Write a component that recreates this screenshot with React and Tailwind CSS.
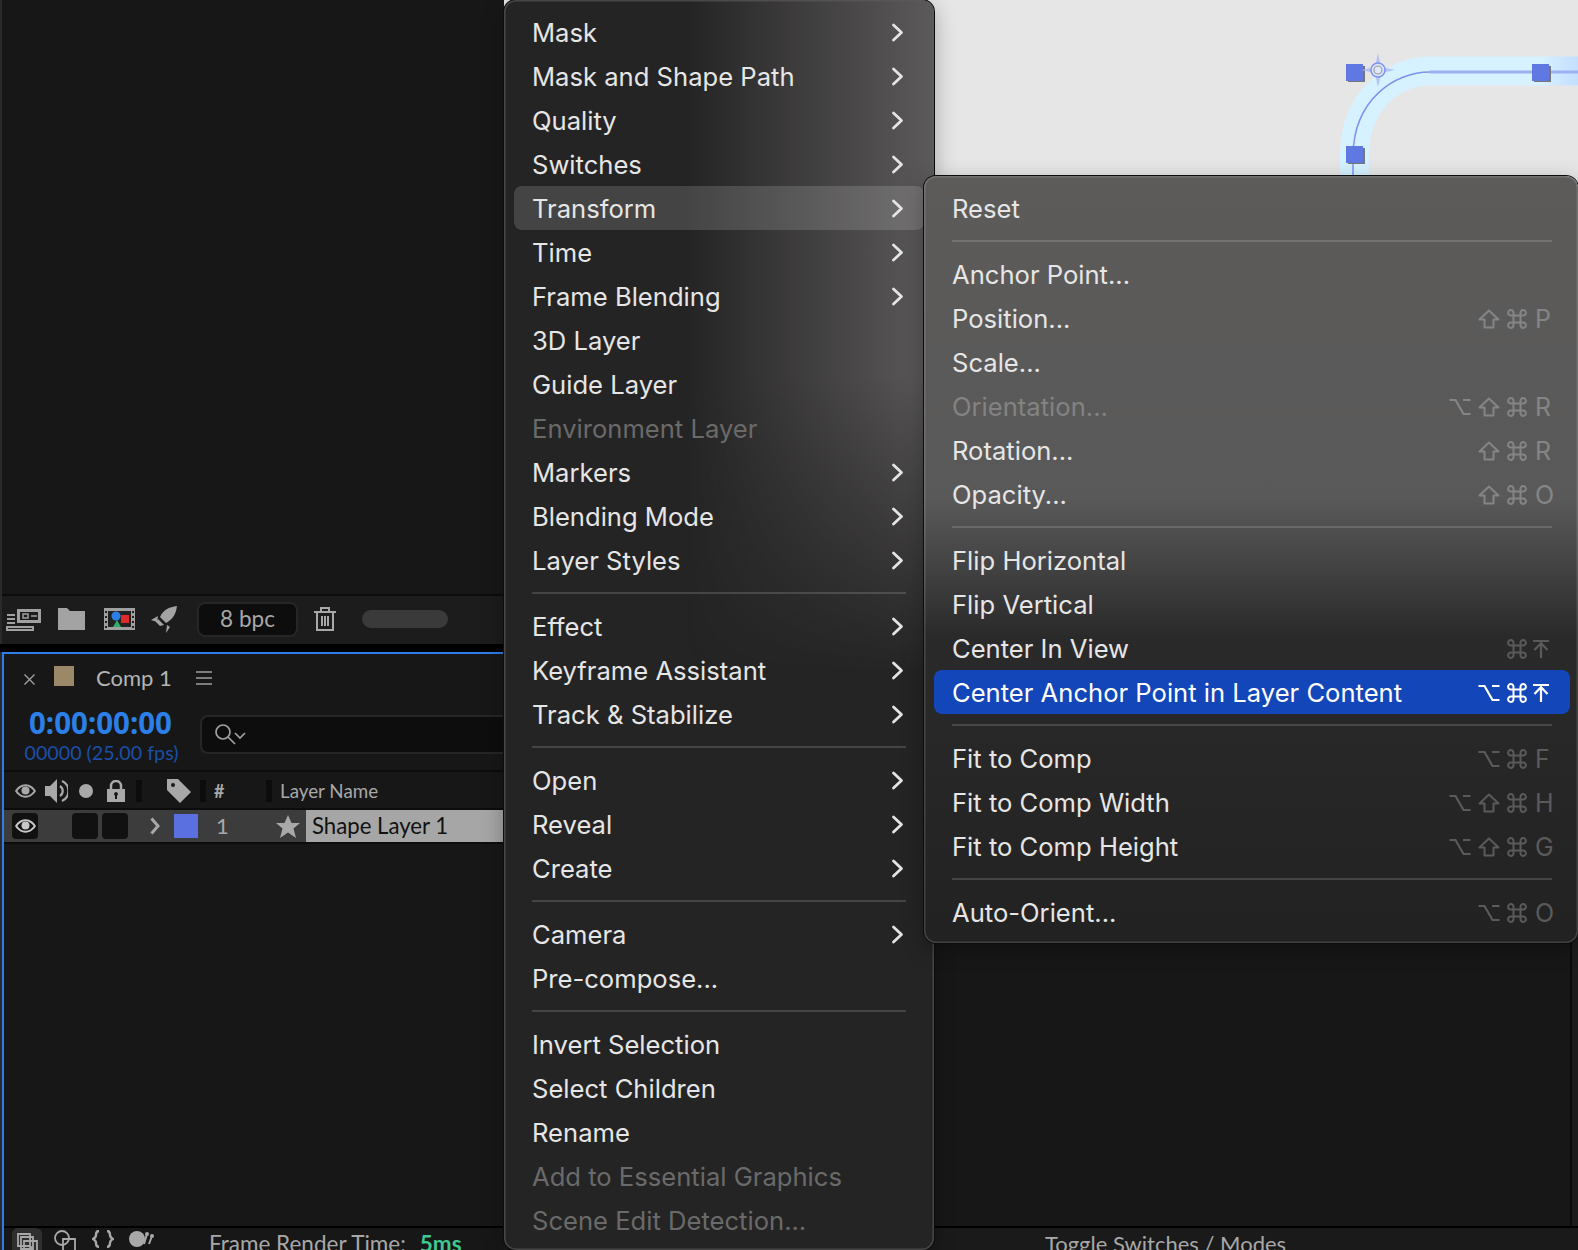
import React from 'react';

const mainMenu = [
  [
    { label: 'Mask', sub: true },
    { label: 'Mask and Shape Path', sub: true },
    { label: 'Quality', sub: true },
    { label: 'Switches', sub: true },
    { label: 'Transform', sub: true, open: true },
    { label: 'Time', sub: true },
    { label: 'Frame Blending', sub: true },
    { label: '3D Layer' },
    { label: 'Guide Layer' },
    { label: 'Environment Layer', disabled: true },
    { label: 'Markers', sub: true },
    { label: 'Blending Mode', sub: true },
    { label: 'Layer Styles', sub: true },
  ],
  [
    { label: 'Effect', sub: true },
    { label: 'Keyframe Assistant', sub: true },
    { label: 'Track & Stabilize', sub: true },
  ],
  [
    { label: 'Open', sub: true },
    { label: 'Reveal', sub: true },
    { label: 'Create', sub: true },
  ],
  [
    { label: 'Camera', sub: true },
    { label: 'Pre-compose...' },
  ],
  [
    { label: 'Invert Selection' },
    { label: 'Select Children' },
    { label: 'Rename' },
    { label: 'Add to Essential Graphics', disabled: true },
    { label: 'Scene Edit Detection...', disabled: true },
  ],
];

const transformMenu = [
  [{ label: 'Reset' }],
  [
    { label: 'Anchor Point...' },
    { label: 'Position...', keys: ['shift', 'cmd', 'P'] },
    { label: 'Scale...' },
    { label: 'Orientation...', disabled: true, light: true, keys: ['opt', 'shift', 'cmd', 'R'] },
    { label: 'Rotation...', keys: ['shift', 'cmd', 'R'] },
    { label: 'Opacity...', keys: ['shift', 'cmd', 'O'] },
  ],
  [
    { label: 'Flip Horizontal' },
    { label: 'Flip Vertical' },
    { label: 'Center In View', keys: ['cmd', 'top'], dim: true },
    { label: 'Center Anchor Point in Layer Content', keys: ['opt', 'cmd', 'top'], active: true },
  ],
  [
    { label: 'Fit to Comp', keys: ['opt', 'cmd', 'F'], dim: true },
    { label: 'Fit to Comp Width', keys: ['opt', 'shift', 'cmd', 'H'], dim: true },
    { label: 'Fit to Comp Height', keys: ['opt', 'shift', 'cmd', 'G'], dim: true },
  ],
  [{ label: 'Auto-Orient...', keys: ['opt', 'cmd', 'O'], dim: true }],
];

const Chevron = () => (
  <svg width="13" height="19" viewBox="0 0 13 19" fill="none" stroke="#e4e4e4" strokeWidth="2.8" strokeLinecap="round" strokeLinejoin="round">
    <path d="M2.5 2l8 7.5-8 7.5" />
  </svg>
);

const KeyGlyph = ({ name }) => {
  if (name === 'opt') {
    return (
      <svg width="22" height="20" viewBox="0 0 22 20" fill="none" stroke="currentColor" strokeWidth="2.2">
        <path d="M0.5 3h6l8 14h7M14 3h7.5" />
      </svg>
    );
  }
  if (name === 'shift') {
    return (
      <svg width="22" height="20" viewBox="0 0 22 20" fill="none" stroke="currentColor" strokeWidth="2" strokeLinejoin="round">
        <path d="M11 1.5L1.5 10.5h5v8h9v-8h5z" />
      </svg>
    );
  }
  if (name === 'cmd') {
    return (
      <svg width="20" height="20" viewBox="0 0 20 20" fill="none" stroke="currentColor" strokeWidth="2">
        <path d="M6.5 6.5h7v7h-7zM6.5 6.5H4a2.7 2.7 0 1 1 2.5-2.5zM13.500 6.500V4A2.700 2.700 0 1 1 16 6.500zM6.500 13.500H4A2.700 2.700 0 1 0 6.500 16zM13.500 13.500V16A2.700 2.700 0 1 0 16 13.500z" />
      </svg>
    );
  }
  if (name === 'top') {
    return (
      <svg className="ml-[-1px] mr-[5px]" width="16" height="20" viewBox="0 0 16 20" fill="none" stroke="currentColor" strokeWidth="2.2">
        <path d="M0 2h16M8 19V4M1.500 11L8 4l6.500 7" />
      </svg>
    );
  }
  return <span className="ml-[1px] w-[19px] text-[25px] leading-none">{name}</span>;
};

const MenuRow = ({ item }) => {
  let rowColor = 'text-[#e6e6e6]';
  if (item.disabled) rowColor = item.light ? 'text-[#838383]' : 'text-[#6a6a6a]';
  let bg = '';
  if (item.open) bg = 'rounded-lg bg-white/15';
  if (item.active) bg = 'rounded-lg bg-[#1346b8] text-white';
  let keyColor = item.dim ? 'text-[#5a5a5a]' : 'text-[#858585]';
  if (item.active) keyColor = 'text-white';
  return (
    <div className={`flex h-[44px] items-center pl-[18px] pr-[16px] ${rowColor} ${bg}`}>
      <span className="whitespace-nowrap pt-[2px] text-[25.600px]">{item.label}</span>
      {item.sub && (
        <span className="ml-auto mr-[4px] flex">
          <Chevron />
        </span>
      )}
      {item.keys && (
        <span className={`ml-auto flex items-center gap-[7px] pt-[2px] ${keyColor}`}>
          {item.keys.map((k) => (
            <KeyGlyph key={k} name={k} />
          ))}
        </span>
      )}
    </div>
  );
};

const MenuGroups = ({ groups, sepClass }) => (
  <>
    {groups.map((group, i) => (
      <div key={i}>
        {i > 0 && (
          <div className="flex h-[22px] items-center">
            <div className={`h-[2px] bg-white/15 ${sepClass}`} />
          </div>
        )}
        {group.map((item) => (
          <MenuRow key={item.label} item={item} />
        ))}
      </div>
    ))}
  </>
);

const GrayEye = ({ className }) => (
  <svg className={className} viewBox="0 0 22 14" fill="#a8a8a8">
    <path d="M11 0C6 0 2 3.500 0 7c2 3.500 6 7 11 7s9-3.500 11-7c-2-3.500-6-7-11-7zm0 2c3.600 0 6.800 2.200 8.600 5-1.800 2.800-5 5-8.600 5S4.200 9.800 2.400 7C4.200 4.200 7.400 2 11 2z" />
    <circle cx="11" cy="6.500" r="4.200" />
  </svg>
);

const ProjectToolbar = () => (
  <div className="flex h-[48px] items-center bg-[#1c1c1c] pb-[2px]">
    <svg className="ml-[4px] h-[24px] w-[36px]" viewBox="0 0 36 24" fill="none" stroke="#a0a0a0">
      <path d="M11 2h24v14H11z" fill="#a0a0a0" stroke="none" />
      <path d="M14 5h18v8H14z" fill="#1c1c1c" stroke="none" />
      <path d="M17 7h5v4h-5zM25 9h6" strokeWidth="1.500" />
      <path d="M1 8h8M1 12h8M1 16h8M1 20h26v3H1z" strokeWidth="2" />
    </svg>
    <svg className="ml-[16px] h-[22px] w-[27px]" viewBox="0 0 27 22" fill="#a3a3a3">
      <path d="M0 0h9l3 3h15v19H0z" />
    </svg>
    <svg className="ml-[19px] h-[22px] w-[31px]" viewBox="0 0 31 22">
      <path d="M0 0h31v22H0z" fill="#a0a0a0" />
      <path d="M4 3h23v16H4z" fill="#222" />
      <path d="M1 3h2v2H1zM1 8h2v2H1zM1 13h2v2H1zM1 18h2v2H1zM28 3h2v2h-2zM28 8h2v2h-2zM28 13h2v2h-2zM28 18h2v2h-2z" fill="#222" />
      <circle cx="12" cy="8" r="4.500" fill="#2d7fe8" />
      <path d="M17 7h8v8h-8z" fill="#e02a2a" />
      <path d="M13 12l4 7H9z" fill="#2fae6a" />
    </svg>
    <svg className="ml-[16px] h-[27px] w-[26px]" viewBox="0 0 26 27" fill="#a3a3a3">
      <path d="M26 0c-8 1-14 4-17 11l6 6C22 13 25 8 26 0z" />
      <path d="M7 10L0 14l6 2zM16 19l-1 8 4-6z" />
      <path d="M7 13l6 6-4 1-4-4z" />
    </svg>
    <div className="ml-[20px] flex h-[35px] w-[101px] items-center justify-center rounded-lg border-2 border-[#262626] bg-[#0d0d0d] font-['Lato'] text-[22.500px] text-[#a8a8a8]">
      8 bpc
    </div>
    <svg className="ml-[16px] h-[24px] w-[22px]" viewBox="0 0 22 24" fill="none" stroke="#a8a8a8" strokeWidth="2">
      <path d="M0 5h22M7 5V1h8v4M3 5h16v18H3zM8 9v10M11 9v10M14 9v10" />
    </svg>
    <div className="ml-[26px] h-[18px] w-[86px] rounded-full bg-[#3a3a3a]" />
  </div>
);

const LayerHeader = () => (
  <div className="flex h-[36px] items-center pt-[2px] text-[#a8a8a8]">
    <GrayEye className="ml-[11px] h-[14px] w-[21px]" />
    <svg className="ml-[9px] h-[24px] w-[23px]" viewBox="0 0 23 24" fill="#a8a8a8">
      <path d="M0 7h5l7-7v24l-7-7H0z" />
      <path d="M15 7a6 6 0 0 1 0 10M17 2a11 11 0 0 1 0 20" fill="none" stroke="#a8a8a8" strokeWidth="2.200" />
    </svg>
    <div className="ml-[11px] h-[14px] w-[14px] rounded-full bg-[#a8a8a8]" />
    <svg className="ml-[14px] h-[22px] w-[18px]" viewBox="0 0 18 22" fill="#a8a8a8">
      <path d="M4 10V6a5 5 0 0 1 10 0v4" fill="none" stroke="#a8a8a8" strokeWidth="2.500" />
      <path fillRule="evenodd" d="M0 9h18v13H0zM9 12a2 2 0 0 0-1 3.700V19h2v-3.300A2 2 0 0 0 9 12z" />
    </svg>
    <div className="ml-[11px] h-[22px] w-[6px] bg-[#0c0c0c]" />
    <svg className="ml-[25px] h-[24px] w-[24px]" viewBox="0 0 24 24" fill="#a8a8a8">
      <path fillRule="evenodd" d="M0 0h11l13 13-11 11L0 11zM6 4a2 2 0 1 0 0 4 2 2 0 0 0 0-4z" />
    </svg>
    <div className="ml-[9px] h-[22px] w-[6px] bg-[#0c0c0c]" />
    <span className="ml-[8px] w-[10px] font-['Lato'] text-[18px] font-bold leading-none">#</span>
    <div className="ml-[42px] h-[22px] w-[6px] bg-[#0c0c0c]" />
    <span className="ml-[8px] font-['Lato'] text-[18.800px] leading-none">Layer Name</span>
  </div>
);

const LayerRow = () => (
  <div className="flex h-[32px] items-center bg-[#3c3c3c]">
    <div className="ml-[8px] flex h-[26px] w-[26px] items-center justify-center rounded bg-[#111111]">
      <svg className="h-[14px] w-[21px]" viewBox="0 0 22 14" fill="#c8c8c8">
        <path d="M11 0C6 0 2 3.500 0 7c2 3.500 6 7 11 7s9-3.500 11-7c-2-3.500-6-7-11-7zm0 2c3.600 0 6.800 2.200 8.600 5-1.800 2.800-5 5-8.600 5S4.200 9.800 2.400 7C4.200 4.200 7.400 2 11 2z" />
        <circle cx="11" cy="6.500" r="4.200" />
      </svg>
    </div>
    <div className="ml-[34px] h-[26px] w-[26px] rounded bg-[#111111]" />
    <div className="ml-[4px] h-[26px] w-[26px] rounded bg-[#111111]" />
    <svg className="ml-[22px] h-[18px] w-[10px]" viewBox="0 0 10 18" fill="none" stroke="#a8a8a8" strokeWidth="3">
      <path d="M1.500 1.500L8 9l-6.500 7.500" />
    </svg>
    <div className="ml-[14px] h-[24px] w-[24px] bg-[#5a6fe0]" />
    <span className="ml-[18px] w-[13px] font-['Lato'] text-[22px] leading-none text-[#a8a8a8]">1</span>
    <svg className="ml-[47px] h-[23px] w-[24px]" viewBox="0 0 24 23" fill="#a8a8a8">
      <path d="M12 0l3.500 8H24l-6.500 5.500L20 23l-8-5.500L4 23l2.500-9.500L0 8h8.500z" />
    </svg>
    <div className="ml-[6px] flex h-full flex-1 items-center bg-[#a6a6a6] pl-[6px] font-['Lato'] text-[22.200px] text-[#111111]">
      Shape Layer 1
    </div>
  </div>
);

const TimelinePanel = () => (
  <div className="ml-[2px] flex min-h-0 flex-1 flex-col border-l-2 border-t-2 border-[#2f7de6] bg-[#171717]">
    <div className="flex h-[50px] items-center">
      <svg className="ml-[20px] h-[11px] w-[11px]" viewBox="0 0 11 11" stroke="#a0a0a0" strokeWidth="1.400">
        <path d="M0.500 0.500l10 10M10.500 0.500l-10 10" />
      </svg>
      <div className="mb-[6px] ml-[19px] h-[20px] w-[20px] bg-[#9a8866]" />
      <span className="mb-[4px] ml-[22px] font-['Lato'] text-[22px] text-[#b4b4b4]">Comp 1</span>
      <svg className="mb-[2px] ml-[24px] h-[14px] w-[16px]" viewBox="0 0 16 14" stroke="#a0a0a0" strokeWidth="1.600">
        <path d="M0 1h16M0 7h16M0 13h16" />
      </svg>
    </div>
    <div className="flex h-[66px] items-start">
      <div className="ml-[20px] w-[158px] pt-[1px]">
        <div className="pr-[5px] text-center font-['Noto_Sans'] text-[29.500px] font-bold leading-[36px] text-[#2d7fe8]">0:00:00:00</div>
        <div className="mt-[1px] whitespace-nowrap pr-[3px] text-center font-['Lato'] text-[19.700px] leading-[22px] text-[#1b4fa8]">00000 (25.00 fps)</div>
      </div>
      <div className="ml-[18px] mt-[11px] flex h-[39px] flex-1 items-center rounded-l-lg border-2 border-r-0 border-[#262626] bg-[#0d0d0d] pl-[13px]">
        <svg className="h-[22px] w-[32px]" viewBox="0 0 32 22" fill="none" stroke="#a0a0a0" strokeWidth="1.700">
          <circle cx="8" cy="8" r="7" />
          <path d="M13 13l7 7M20 9l5 5 5-5" />
        </svg>
      </div>
    </div>
    <div className="h-[2px] bg-[#0c0c0c]" />
    <LayerHeader />
    <div className="h-[2px] bg-[#0c0c0c]" />
    <LayerRow />
    <div className="h-[2px] bg-[#0c0c0c]" />
    <div className="flex-1" />
  </div>
);

const StatusLeft = () => (
  <div className="flex h-[22px] items-start overflow-hidden border-l-2 border-[#2f7de6] bg-[#171717]">
    <div className="ml-[8px] h-[30px] w-[30px] rounded-md bg-[#2f2f2f] pl-[5px] pt-[5px]">
      <svg className="h-[22px] w-[21px]" viewBox="0 0 21 22" fill="none" stroke="#a8a8a8" strokeWidth="1.800">
        <path d="M1 1h12v12H1zM4 4h12v12H4zM7 8h13v13H7z" />
        <circle cx="14" cy="15" r="2" fill="#a8a8a8" stroke="none" />
      </svg>
    </div>
    <svg className="ml-[12px] mt-[2px] h-[24px] w-[22px]" viewBox="0 0 22 24" fill="none" stroke="#a8a8a8" strokeWidth="1.800">
      <circle cx="8" cy="8" r="7" />
      <path d="M9 9h12v12H9z" />
    </svg>
    <svg className="ml-[16px] mt-[2px] h-[24px] w-[22px]" viewBox="0 0 22 24" fill="none" stroke="#a8a8a8" strokeWidth="2.400">
      <path d="M7 1C4 1 4 3 4 5c0 2-1 3-3 4 2 1 3 2 3 4 0 2 0 4 3 4M15 1c3 0 3 2 3 4 0 2 1 3 3 4-2 1-3 2-3 4 0 2 0 4-3 4" />
    </svg>
    <svg className="ml-[15px] mt-[2px] h-[24px] w-[25px]" viewBox="0 0 25 24" fill="#a8a8a8">
      <circle cx="8" cy="9" r="8" />
      <path d="M15 14l3-10M20 14l3-8" stroke="#a8a8a8" strokeWidth="2" />
      <circle cx="18" cy="4" r="2" />
      <circle cx="23" cy="6" r="2" />
    </svg>
    <span className="ml-[55px] mt-[3px] whitespace-nowrap font-['Lato'] text-[22.500px] leading-[26px] text-[#a8a8a8]">Frame Render Time:</span>
    <span className="ml-[14px] mt-[3px] font-['Lato'] text-[22.500px] font-bold leading-[26px] text-[#3fc98f]">5ms</span>
  </div>
);

const ShapeLayer = () => (
  <svg className="absolute left-[830px] top-0 h-[175px] w-[244px]" viewBox="0 0 244 175" fill="none">
    <defs>
      <linearGradient id="strokeFade" x1="0" x2="244" y1="0" y2="0" gradientUnits="userSpaceOnUse">
        <stop offset="0.85" stopColor="#d6f1ff" />
        <stop offset="1" stopColor="#c4deff" />
      </linearGradient>
    </defs>
    <path d="M244 71H96C60 71 20.500 100 20.500 155V180" stroke="url(#strokeFade)" strokeWidth="29" />
    <path d="M244 72H96C60 72 20 100 19 155V180" stroke="#7d93ee" strokeWidth="1.500" />
    <path d="M96 72H244" stroke="#9db0f0" strokeWidth="3" />
    <path d="M14 66h17v16H14zM200 66h17v16h-17zM14 148h17v16H14z" fill="#777" />
    <path d="M12 64h17v17H12zM198 64h17v17h-17zM12 146h17v17H12z" fill="#5f78e2" />
    <path d="M44 53l3 14 14 3-14 3-3 14-3-14-14-3 14-3z" fill="#aab8f2" fillOpacity="0.8" />
    <circle cx="44" cy="70" r="7" fill="#dfe8fb" stroke="#7d93ee" strokeWidth="1.500" />
    <circle cx="44" cy="70" r="4" stroke="#9a9a9a" strokeWidth="1.200" />
  </svg>
);

export default function App() {
  return (
    <div className="relative flex h-[1250px] w-[1578px] overflow-hidden bg-[#171717] font-['Inter']">
      <div className="flex h-full w-[504px] shrink-0 flex-col bg-[#2a2a2a]">
        <div className="ml-[2px] h-[594px] bg-[#171717]" />
        <div className="ml-[2px] h-[2px] bg-[#0c0c0c]" />
        <div className="ml-[2px]">
          <ProjectToolbar />
        </div>
        <div className="h-[8px] shrink-0 bg-black" />
        <TimelinePanel />
        <div className="ml-[2px] h-[2px] border-l-2 border-[#2f7de6] bg-black" />
        <div className="ml-[2px]">
          <StatusLeft />
        </div>
      </div>

      <div className="flex h-full flex-1 flex-col">
        <div className="relative h-[600px] bg-[#e6e6e6]">
          <ShapeLayer />
        </div>
        <div className="flex min-h-0 flex-1">
          <div className="flex-1 bg-[#171717]" />
          <div className="w-[8px] border-l-2 border-[#0a0a0a] bg-[#1c1c1c]" />
        </div>
        <div className="h-[2px] bg-black" />
        <div className="flex h-[22px] items-start overflow-hidden bg-[#1a1a1a]">
          <span className="ml-[541px] mt-[3px] whitespace-nowrap font-['Lato'] text-[22px] leading-[26px] text-[#a8a8a8]">Toggle Switches / Modes</span>
        </div>
      </div>

      {/* main context menu */}
      <div className="absolute left-[504px] top-0 h-[1250px] w-[430px] overflow-hidden rounded-xl bg-[#252424] px-[10px] pt-[10px] shadow-[0_0_0_1px_#0c0c0c,inset_0_0_0_1.500px_rgba(255,255,255,0.16),0_6px_22px_rgba(0,0,0,0.3)]">
        <div className="pointer-events-none absolute inset-0 bg-[linear-gradient(to_right,transparent_42%,#5c5a5a_100%)] [mask-image:linear-gradient(to_bottom,black_30%,transparent_54%)]" />
        <div className="relative">
          <MenuGroups groups={mainMenu} sepClass="ml-[18px] w-[374px]" />
        </div>
      </div>

      {/* Transform submenu */}
      <div className="absolute left-[924px] top-[176px] h-[767px] w-[654px] rounded-xl bg-[linear-gradient(to_bottom,#5c5b5a_0%,#5a5959_42%,#464545_50%,#2b2a2a_60%,#232222_100%)] pl-[10px] pr-[8px] pt-[10px] shadow-[0_0_0_1px_#0c0c0c,inset_0_0_0_1.500px_rgba(255,255,255,0.14),0_6px_22px_rgba(0,0,0,0.3)]">
        <MenuGroups groups={transformMenu} sepClass="ml-[18px] w-[600px]" />
      </div>
    </div>
  );
}
